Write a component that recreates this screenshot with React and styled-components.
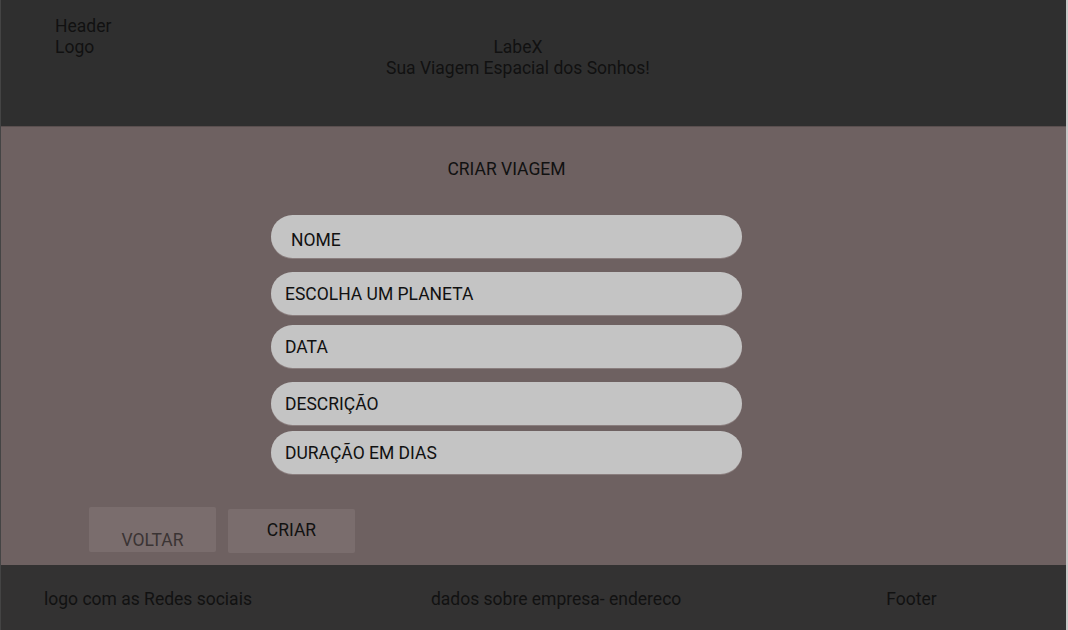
import React from "react";
import styled, { createGlobalStyle } from "styled-components";

const GlobalStyle = createGlobalStyle`
  html, body {
    margin: 0;
    padding: 0;
    background: #c9c9c9;
  }
  body {
    font-family: Roboto, "Liberation Sans", sans-serif;
    font-size: 17.5px;
    color: #111;
  }
`;

const Page = styled.div`
  width: 1066px;
  height: 630px;
  display: flex;
  flex-direction: column;
  border-left: 1px solid #444;
  box-sizing: border-box;
`;

const Header = styled.header`
  height: 126px;
  background: #2f2f2f;
  display: flex;
  align-items: flex-start;
  padding: 16px 0 0 54px;
  box-sizing: border-box;
  line-height: 21px;
`;

const HeaderLeft = styled.div`
  width: 331px;
`;

const Title = styled.div`
  margin-top: 21px;
  text-align: center;
`;

const Main = styled.main`
  flex: 1;
  background: #6e6161;
  display: flex;
  flex-direction: column;
  border-top: 1px solid #5a4f4f;
`;

const Heading = styled.h1`
  margin: 32px 0 0;
  padding-right: 54px;
  font-size: 17.5px;
  font-weight: 400;
  line-height: 20px;
  text-align: center;
`;

const Form = styled.form`
  width: 471px;
  margin: 36px 0 0 270px;
  display: flex;
  flex-direction: column;
`;

const Field = styled.div`
  height: 43px;
  margin-top: ${({ $gap }) => $gap}px;
  border-radius: 22px;
  background: #c4c4c4;
  display: flex;
  align-items: center;
  padding-left: ${({ $pad }) => $pad}px;
  padding-top: ${({ $shift }) => $shift || 0}px;
  box-sizing: border-box;
  box-shadow: 0 1px 0 #8a7e7e;
`;

const Actions = styled.div`
  display: flex;
  align-items: flex-start;
  gap: 12px;
  margin: 33px 0 0 88px;
`;

const Button = styled.button`
  width: 127px;
  height: ${({ $muted }) => ($muted ? 45 : 44)}px;
  margin-top: ${({ $top }) => $top}px;
  border: 0;
  border-radius: 2px;
  background: #7a6d6d;
  color: ${({ $muted }) => ($muted ? "#3a3434" : "#111")};
  font-family: Roboto, "Liberation Sans", sans-serif;
  font-size: 17.5px;
  padding: ${({ $muted }) => ($muted ? "20px 0 0" : "0 0 3px")};
`;

const Footer = styled.footer`
  height: 65px;
  background: #333232;
  display: flex;
  align-items: center;
  padding-top: 3px;
  box-sizing: border-box;
`;

const FooterItem = styled.span`
  margin-left: ${({ $left }) => $left}px;
`;

const fields = [
  { label: "NOME", gap: 0, pad: 20, shift: 7 },
  { label: "ESCOLHA UM PLANETA", gap: 14, pad: 14 },
  { label: "DATA", gap: 10, pad: 14 },
  { label: "DESCRIÇÃO", gap: 14, pad: 14 },
  { label: "DURAÇÃO EM DIAS", gap: 6, pad: 14 },
];

export default function App() {
  return (
    <>
      <GlobalStyle />
      <Page>
        <Header>
          <HeaderLeft>
            <div>Header</div>
            <div>Logo</div>
          </HeaderLeft>
          <Title>
            <div>LabeX</div>
            <div>Sua Viagem Espacial dos Sonhos!</div>
          </Title>
        </Header>
        <Main>
          <Heading>CRIAR VIAGEM</Heading>
          <Form>
            {fields.map((f) => (
              <Field key={f.label} $gap={f.gap} $pad={f.pad} $shift={f.shift}>
                {f.label}
              </Field>
            ))}
          </Form>
          <Actions>
            <Button type="button" $muted $top={0}>
              VOLTAR
            </Button>
            <Button type="button" $top={2}>
              CRIAR
            </Button>
          </Actions>
        </Main>
        <Footer>
          <FooterItem $left={43}>logo com as Redes sociais</FooterItem>
          <FooterItem $left={179}>dados sobre empresa- endereco</FooterItem>
          <FooterItem $left={205}>Footer</FooterItem>
        </Footer>
      </Page>
    </>
  );
}
